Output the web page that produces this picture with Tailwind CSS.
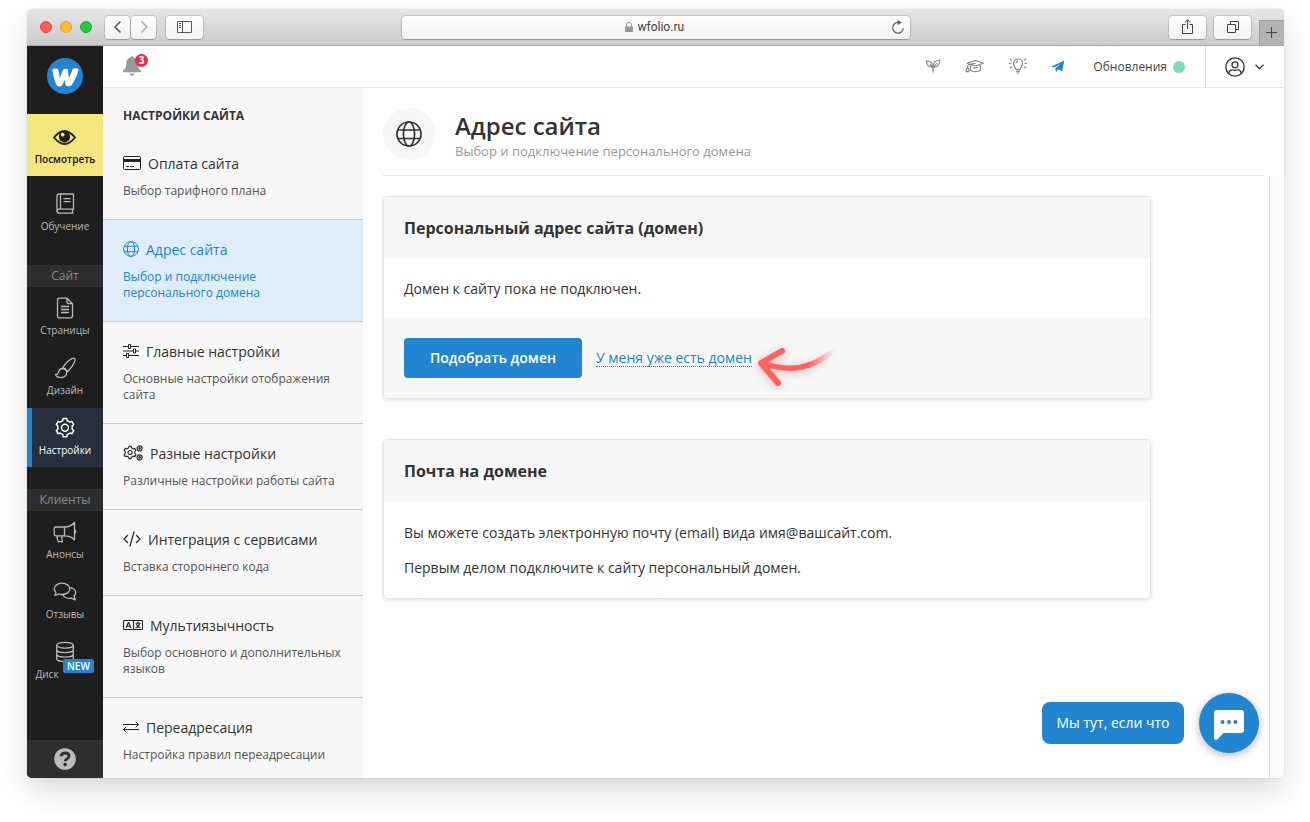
<!DOCTYPE html>
<html lang="ru">
<head>
<meta charset="utf-8">
<meta name="viewport" content="width=device-width, initial-scale=1">
<title>Адрес сайта</title>
<script src="https://cdn.jsdelivr.net/npm/@tailwindcss/browser@4"></script>
</head>
<body class="flex h-screen flex-col bg-white pt-[9px] pr-[26px] pb-11 pl-[27px] font-['Open_Sans','Noto_Sans',sans-serif] text-[#333] overflow-hidden">
<div class="flex min-h-0 flex-1 flex-col rounded-[5px] shadow-[0_0_1px_rgba(0,0,0,0.35),0_14px_30px_-3px_rgba(0,0,0,0.17)]">

  <!-- Browser toolbar -->
  <header class="relative flex h-[37px] shrink-0 items-center rounded-t-[5px] border-b border-[#a5a5a5] bg-linear-to-b from-[#e6e6e6] to-[#cbcbcb] pl-[13px]">
    <div class="flex gap-2">
      <span class="size-3 rounded-full border border-[#e2463f] bg-[#fc5b57]"></span>
      <span class="size-3 rounded-full border border-[#e0a02a] bg-[#fdbc2e]"></span>
      <span class="size-3 rounded-full border border-[#1fac2f] bg-[#27c93f]"></span>
    </div>
    <div class="ml-[13px] flex gap-px">
      <button aria-label="Назад" class="flex h-[23px] w-[25px] items-center justify-center rounded-[4px] bg-linear-to-b from-white to-[#f2f2f2] shadow-[0_0_1px_1px_rgba(0,0,0,0.14),0_1px_0_rgba(0,0,0,0.15)]">
        <svg class="size-3" viewBox="0 0 12 12" fill="none" stroke="#555" stroke-width="1.5"><path d="M8.5.5 3 6l5.500 5.500"/></svg>
      </button>
      <button aria-label="Вперёд" class="flex h-[23px] w-[25px] items-center justify-center rounded-[4px] bg-linear-to-b from-white to-[#f2f2f2] shadow-[0_0_1px_1px_rgba(0,0,0,0.14),0_1px_0_rgba(0,0,0,0.15)]">
        <svg class="size-3" viewBox="0 0 12 12" fill="none" stroke="#aaa" stroke-width="1.500"><path d="M3.500.5 9 6l-5.500 5.500"/></svg>
      </button>
    </div>
    <button aria-label="Боковая панель" class="ml-[10px] flex h-[23px] w-[37px] items-center justify-center rounded-[4px] bg-linear-to-b from-white to-[#f2f2f2] shadow-[0_0_1px_1px_rgba(0,0,0,0.14),0_1px_0_rgba(0,0,0,0.15)]">
      <svg class="h-3 w-[15px]" viewBox="0 0 15 12" fill="none" stroke="#555"><path d="M.5.5h14v11H.5zM5.500.5v11M2 2.500h2M2 4.500h2M2 6.500h2"/></svg>
    </button>
    <form class="absolute inset-y-0 left-[375px] flex w-[508px] items-center">
      <div class="relative flex h-[23px] w-full items-center justify-center gap-[5px] rounded-[4px] bg-linear-to-b from-[#fdfdfd] to-[#f2f2f2] shadow-[0_0_1px_1px_rgba(0,0,0,0.14),0_1px_0_rgba(0,0,0,0.15)]">
        <svg class="h-[10px] w-2" viewBox="0 0 8 10"><path d="M0 4.500h8V10H0z" fill="#999"/><path d="M1.500 5V3a2.500 2.500 0 0 1 5 0v2" fill="none" stroke="#999"/></svg>
        <input aria-label="Адрес" value="wfolio.ru" class="w-[50px] bg-transparent p-0 font-[Roboto,sans-serif] text-[12px] leading-[16px] text-[#444] outline-none">
        <button type="button" aria-label="Обновить" class="absolute right-[5px] flex">
          <svg class="size-[14px]" viewBox="0 0 14 14" fill="none" stroke="#666" stroke-width="1.200"><path d="M7.500 2.500a5.300 5.300 0 1 0 4.800 5.500"/><path d="M6.500 0v5l4.500-2.500z" fill="#666" stroke="none"/></svg>
        </button>
      </div>
    </form>
    <div class="ml-auto flex items-center gap-2">
      <button aria-label="Поделиться" class="flex h-[23px] w-[37px] items-center justify-center rounded-[4px] bg-linear-to-b from-white to-[#f2f2f2] shadow-[0_0_1px_1px_rgba(0,0,0,0.14),0_1px_0_rgba(0,0,0,0.15)]">
        <svg class="mb-px h-[15px] w-[11px]" viewBox="0 0 11 15" fill="none" stroke="#444"><path d="M3.500 5.500h-3v9h10v-9h-3M5.500 10V1M2.700 3.600 5.500.8l2.800 2.800"/></svg>
      </button>
      <button aria-label="Все вкладки" class="flex h-[23px] w-[37px] items-center justify-center rounded-[4px] bg-linear-to-b from-white to-[#f2f2f2] shadow-[0_0_1px_1px_rgba(0,0,0,0.14),0_1px_0_rgba(0,0,0,0.15)]">
        <svg class="size-3" viewBox="0 0 12 12" fill="none" stroke="#444"><path d="M.5 3.500h8v8h-8zM3.500 3.500v-3h8v8h-3"/></svg>
      </button>
      <button aria-label="Новая вкладка" class="-mb-[6px] flex h-[25px] w-[25px] items-center justify-center self-end border-t border-l border-[#9d9d9d] bg-[#b3b3b3] pr-px">
        <svg class="size-[11px]" viewBox="0 0 11 11" stroke="#444"><path d="M5.500 0v11M0 5.500h11"/></svg>
      </button>
    </div>
  </header>

  <div class="flex min-h-0 flex-1 overflow-hidden rounded-b-[5px] bg-white">

    <!-- Main navigation -->
    <nav class="flex w-[76px] shrink-0 flex-col bg-[#1e1e1e] text-center text-[10px] leading-[14px] text-[#bbb]">
      <a href="#" aria-label="wfolio" class="flex h-[68px] items-center justify-center pb-2">
        <svg class="size-9" viewBox="0 0 36 36"><circle cx="18" cy="18" r="18" fill="#2185d0"/><path d="M5.300 11.200c2.600-1 5.400-.8 6 .4.600 2.400 1.100 5.500 1.500 8.300 1.200-3 2.300-5.800 3.300-8.300.9-1 4-1 5 0 .1 3 .3 5.700.7 8.400 1.700-3.100 2.900-6.200 3.700-9 1.200-1 5-.9 6.200.2-1.500 6-4.400 12.300-7.500 16.300-1.200 1-4.100 1-5.300 0-.7-1.700-1.100-3.600-1.400-5.500-.8 2.200-1.600 4.200-2.500 5.800-1.200.8-3.900.8-5 0C7.400 22.700 6 17.100 5.300 11.200z" fill="#fff"/></svg>
      </a>
      <a href="#" class="flex h-[62px] flex-col items-center bg-[#f5e57e] pt-[13px] font-semibold text-[#111]">
        <svg class="mr-px h-5 w-[23px]" viewBox="0 0 23 20"><path d="M1 10.500Q11.500-2.500 22 10.500 11.500 23.500 1 10.500Z" fill="none" stroke="#1e1e1e" stroke-width="1.800"/><circle cx="11.500" cy="9.800" r="5.600" fill="#1e1e1e"/><circle cx="9.700" cy="7.700" r="1.900" fill="#f5e57e"/></svg>
        <span class="mt-[5px]">Посмотреть</span>
      </a>
      <a href="#" class="mt-2 flex h-[59px] flex-col items-center pt-[9px]">
        <svg class="size-[22px]" viewBox="0 0 22 22" fill="none" stroke="#bbb" stroke-width="1.300" stroke-linejoin="round"><path d="M19.500 1H5a2 2 0 0 0-2 2v15a2.200 2.200 0 0 0 2.200 2.200h14.300M19.500 1v15.200H5.200a1.900 1.900 0 0 0 0 3.800M18.500 16.500v3.300M6.500 1v15M9.500 5.700h7M9.500 8.700h7"/></svg>
        <span class="mt-1">Обучение</span>
      </a>
      <h2 class="mt-[22px] h-[22px] bg-[#2e2e2e] text-[12px] leading-[22px] text-[#888]">Сайт</h2>
      <a href="#" class="mt-px flex h-[59px] flex-col items-center pt-[9px]">
        <svg class="size-[22px]" viewBox="0 0 22 22" fill="none" stroke="#bbb" stroke-width="1.300" stroke-linejoin="round"><path d="M13 1.200H5.500a2 2 0 0 0-2 2v15.600a2 2 0 0 0 2 2h11a2 2 0 0 0 2-2V6.700zM13 1.200v3.500a2 2 0 0 0 2 2h3.500M7 9.500h8M7 12.500h8M7 15.500h8"/></svg>
        <span class="mt-1">Страницы</span>
      </a>
      <a href="#" class="mt-px flex h-[59px] flex-col items-center pt-[9px]">
        <svg class="size-[22px]" viewBox="0 0 22 22" fill="none" stroke="#bbb" stroke-width="1.300" stroke-linejoin="round"><path d="M8.200 11.500C11 7 15 3 18.400 1.400c1.500-.7 3 .5 2.600 2C19.800 7.500 16.500 12 12.700 15.200M8.200 11.500c2.200 0 4 1.500 4.500 3.700.2 3.200-2.300 5.400-5.700 5.400-2.800 0-4.800-1.400-5.500-3.100 1.500.2 2.300-.2 2.900-2 .6-2.500 1.800-3.900 3.800-4zM9 10.500c2 .6 3.500 2 4.300 4"/></svg>
        <span class="mt-1">Дизайн</span>
      </a>
      <a href="#" aria-current="page" class="mt-px flex h-[59px] flex-col items-center border-l-5 border-[#2185d0] bg-[#27303c] pt-[9px] pr-[5px] text-white">
        <svg class="size-[22px]" viewBox="0 0 24 24" fill="none" stroke="#fff" stroke-width="1.600" stroke-linejoin="round"><path d="M9.600 3.900 10 1.700h4l.4 2.200 3 1.700 2.100-.8 2 3.500-1.700 1.500v3.600l1.700 1.400-2 3.500-2.100-.8-3 1.700-.4 2.300h-4l-.4-2.300-3-1.700-2.100.8-2-3.500 1.700-1.400V9.800L2.500 8.300l2-3.500 2.100.8z"/><circle cx="12" cy="11.700" r="3.800"/></svg>
        <span class="mt-1">Настройки</span>
      </a>
      <h2 class="mt-[22px] h-[22px] bg-[#2e2e2e] text-[12px] leading-[22px] text-[#888]">Клиенты</h2>
      <a href="#" class="mt-px flex h-[59px] flex-col items-center pt-[9px]">
        <svg class="h-[22px] w-6" viewBox="0 0 24 22" fill="none" stroke="#bbb" stroke-width="1.300" stroke-linejoin="round"><path d="M11.500 6H3a1.800 1.800 0 0 0-1.800 1.800V13A1.800 1.800 0 0 0 3 14.800h8.500zM11.500 6c4 0 7.500-1.600 10-4.500v17.300c-2.500-2.800-6-4-10-4M21.500 8.300c1.600.3 1.600 3.400 0 3.900M4 14.800c0 2 .3 3.800 1.200 5.800h4.300c-1-1.700-.8-4-.4-5.800"/></svg>
        <span class="mt-1">Анонсы</span>
      </a>
      <a href="#" class="mt-px flex h-[59px] flex-col items-center pt-[9px]">
        <svg class="h-[22px] w-6" viewBox="0 0 24 22" fill="none" stroke="#bbb" stroke-width="1.300" stroke-linejoin="round"><path d="M9 2.200c4.300 0 7.800 2.500 7.800 5.700S13.300 13.500 9 13.500c-1.200 0-2.300-.2-3.300-.5-1.300.8-2.500 1.200-4 1.200.8-.9 1.200-1.700 1.300-2.700A5 5 0 0 1 1.200 7.900C1.200 4.700 4.700 2.200 9 2.200zM16.700 6.700c3.400.2 6 2.400 6 5 0 1.300-.6 2.500-1.600 3.400.1 1.400.6 2.600 1.400 3.700-1.600-.1-2.900-.7-4.100-1.700-4 .9-7.400-.9-8.600-3.700"/></svg>
        <span class="mt-1">Отзывы</span>
      </a>
      <a href="#" class="relative mt-px flex h-[59px] flex-col items-center pt-[9px]">
        <svg class="size-[22px]" viewBox="0 0 22 22" fill="none" stroke="#bbb" stroke-width="1.300"><ellipse cx="11" cy="4.200" rx="8.300" ry="2.900"/><path d="M2.700 4.200v13.600c0 1.600 3.700 2.900 8.300 2.900s8.300-1.300 8.300-2.900V4.200M2.700 8.700c0 1.600 3.700 2.900 8.300 2.900s8.300-1.300 8.300-2.900M2.700 13.200c0 1.600 3.700 2.900 8.300 2.900s8.300-1.300 8.300-2.900"/></svg>
        <span class="mt-1 mr-9">Диск</span>
        <span class="absolute top-[27px] left-9 h-[14px] rounded-[2px] bg-[#2185d0] px-1 font-semibold text-white">NEW</span>
      </a>
      <a href="#" aria-label="Помощь" class="mt-auto flex h-[38px] items-center justify-center bg-[#2e2e2e]">
        <svg class="size-[22px]" viewBox="0 0 22 22"><circle cx="11" cy="11" r="10.800" fill="#bbb"/><path d="M7 8.300C7.500 6 9 5 11.100 5c2.300 0 4 1.100 4 3.100 0 2.800-4 2.700-4 5.200" fill="none" stroke="#2e2e2e" stroke-width="2.800"/><circle cx="11.100" cy="16.600" r="1.800" fill="#2e2e2e"/></svg>
      </a>
    </nav>

    <div class="flex min-w-0 flex-1 flex-col">
      <!-- Top bar -->
      <div class="flex h-[42px] shrink-0 items-center border-b border-[#e4e4e4] pl-5">
        <button aria-label="Уведомления: 3" class="relative mb-[2px] flex">
          <svg class="h-5 w-[18px]" viewBox="0 0 18 20" fill="#999"><path d="M8 1.200C8 .5 8.400 0 9 0s1 .5 1 1.200c3.200.6 4.700 3 4.800 6.300.1 4 .9 5.300 2.700 6.800.9.800.5 2-.6 2H1.100c-1.100 0-1.500-1.200-.6-2 1.800-1.500 2.600-2.800 2.700-6.800C3.300 4.200 4.800 1.800 8 1.200zM6.500 17.500h5c-.4 1.400-1.300 2.200-2.500 2.200s-2.100-.8-2.500-2.200z"/></svg>
          <span class="absolute -top-[2px] left-3 size-[13px] rounded-full bg-[#f02849] text-[10px] leading-[13px] font-bold text-white">3</span>
        </button>
        <div class="ml-auto flex items-center gap-6">
          <a href="#" aria-label="Новичкам"><svg class="mb-px size-4" viewBox="0 0 16 16" fill="none" stroke="#888" stroke-width="1.200" stroke-linejoin="round"><path d="M8 14.500V9.500M1.500 3.200c4-.3 6.300 2 6.500 6.300-4 0-6.500-2.300-6.500-6.300zM8 9.500c-.3-4.300 2-7.300 6.700-7.500.2 4.500-2.200 7.500-6.700 7.500L12 5.200M8 9.500 4.800 6.200"/></svg></a>
          <a href="#" aria-label="Обучение"><svg class="mb-px h-4 w-5" viewBox="0 0 20 16" fill="none" stroke="#888" stroke-width="1.200" stroke-linejoin="round"><path d="M10.500 2.500 18.500 5.300 10.500 8 2 5.300zM5.500 7v5.300c2.500 1.800 7.500 1.800 10 0V7M10.500 5.300 4 6.500C2.600 6.900 2.500 8 2.500 10M1.500 10.500h2l.4 3.200H1.200zM8 9.800l5-.2"/></svg></a>
          <a href="#" aria-label="Идеи"><svg class="mb-px h-4 w-[18px]" viewBox="0 0 18 16" fill="none" stroke="#888" stroke-width="1.200"><path d="M7 11.500c0-1.800-2.500-3-2.500-6a4.500 4.500 0 0 1 9 0c0 3-2.500 4.200-2.500 6zM7 13.200h4M7.700 15h2.600M7 5c.1-1.200.8-1.800 2-1.900M0 5.500h2.500M15.500 5.500H18M.8 1l2.200 1.300M17.200 1 15 2.300M.8 10 3 8.700M17.200 10 15 8.700"/></svg></a>
          <a href="#" aria-label="Telegram"><svg class="mb-px h-4 w-[14px]" viewBox="0 0 14 16" fill="#2185d0"><path d="M13.200 2.500 11.300 13.300 7 11.300 5 14.300 4.300 10.200 10.300 5.500 3.200 9.500.5 8.500z"/></svg></a>
          <a href="#" class="ml-[4px] flex items-center gap-[6px] text-[12px] leading-4 text-[#444]">Обновления <span class="size-3 rounded-full bg-[#7bdcb5]"></span></a>
        </div>
        <button aria-label="Профиль" class="ml-5 flex h-[41px] w-[79px] items-center gap-[10px] border-l border-[#e4e4e4] pl-[19px]">
          <svg class="size-5" viewBox="0 0 20 20" fill="none" stroke="#333" stroke-width="1.300"><circle cx="10" cy="10" r="9.200"/><circle cx="10" cy="7.800" r="3"/><path d="M3.800 16.500c.2-2.500 1.600-3.700 3.700-3.700.9.500 1.700.7 2.500.7s1.600-.2 2.500-.7c2.100 0 3.500 1.200 3.700 3.700"/></svg>
          <svg class="h-[6px] w-[9px]" viewBox="0 0 9 6" fill="none" stroke="#333" stroke-width="1.300"><path d="M.5.7l4 4 4-4"/></svg>
        </button>
      </div>

      <div class="flex min-h-0 flex-1">
        <!-- Settings menu -->
        <aside class="w-[260px] shrink-0 overflow-hidden bg-[#f7f7f7] text-[12px] leading-4 text-[#555]">
          <h2 class="h-[46px] px-5 pt-5 font-bold text-[#333]">НАСТРОЙКИ САЙТА</h2>
          <a href="#" class="block border-b border-[#ccc] px-5 py-5">
            <span class="flex items-center gap-[7px] text-[14px] leading-5 text-[#333]"><svg class="mb-[2px] h-[14px] w-[18px]" viewBox="0 0 18 14" fill="none" stroke="#222"><rect x=".5" y=".5" width="17" height="13" rx="1"/><path d="M1 4.500h16" stroke-width="3"/><path d="M3 10.500h3M7 10.500h4"/></svg>Оплата сайта</span>
            <span class="mt-[9px] block">Выбор тарифного плана</span>
          </a>
          <a href="#" aria-current="page" class="block border-b border-[#c3cdd4] bg-[#deedf8] px-5 py-5 text-[#2185d0]">
            <span class="flex items-center gap-[7px] text-[14px] leading-5"><svg class="mb-[2px] size-4" viewBox="0 0 16 16" fill="none" stroke="#2185d0"><circle cx="8" cy="8" r="7.400"/><ellipse cx="8" cy="8" rx="3.700" ry="7.400"/><path d="M1.100 5.300h13.800M1.100 10.700h13.800"/></svg>Адрес сайта</span>
            <span class="mt-[9px] block">Выбор и подключение персонального домена</span>
          </a>
          <a href="#" class="block border-b border-[#ccc] px-5 py-5">
            <span class="flex items-center gap-[7px] text-[14px] leading-5 text-[#333]"><svg class="mb-[2px] h-[14px] w-4" viewBox="0 0 16 14" fill="none" stroke="#222"><path d="M0 2.500h5M8 2.500h8M0 7h10M13 7h3M0 11.500h3M6 11.500h10M5.500.5h2v4h-2zM10.500 5h2v4h-2zM3.500 9.500h2v4h-2z"/></svg>Главные настройки</span>
            <span class="mt-[9px] block">Основные настройки отображения сайта</span>
          </a>
          <a href="#" class="block border-b border-[#ccc] px-5 py-5">
            <span class="flex items-center gap-[7px] text-[14px] leading-5 text-[#333]"><svg class="mb-[2px] h-4 w-5" viewBox="0 0 20 16" fill="none" stroke="#333" stroke-width="1.200" stroke-linejoin="round"><path d="m5.600 2.800.3-1.500h2.300l.3 1.500 1.900 1.100 1.400-.5 1.100 2-1.100 1v2.200l1.100 1-1.100 2-1.400-.5-1.900 1.100-.3 1.500H5.900l-.3-1.500-1.900-1.100-1.500.5-1.100-2 1.100-1V6.400l-1.100-1 1.100-2 1.500.5z"/><circle cx="7" cy="7.500" r="2"/><circle cx="16.600" cy="3.400" r="2.500"/><circle cx="16.600" cy="3.400" r=".7"/><circle cx="16.600" cy="12.400" r="2.500"/><circle cx="16.600" cy="12.400" r=".7"/></svg>Разные настройки</span>
            <span class="mt-[9px] block">Различные настройки работы сайта</span>
          </a>
          <a href="#" class="block border-b border-[#ccc] px-5 py-5">
            <span class="flex items-center gap-[7px] text-[14px] leading-5 text-[#333]"><svg class="mb-[2px] h-4 w-[18px]" viewBox="0 0 18 16" fill="none" stroke="#222" stroke-width="1.200"><path d="M5 4 1 8l4 4M13 4l4 4-4 4M11.200.5 6.800 15.500"/></svg>Интеграция с сервисами</span>
            <span class="mt-[9px] block">Вставка стороннего кода</span>
          </a>
          <a href="#" class="block border-b border-[#ccc] px-5 py-5">
            <span class="flex items-center gap-[7px] text-[14px] leading-5 text-[#333]"><svg class="mb-[2px] h-[10px] w-5" viewBox="0 0 20 10" fill="none" stroke="#222"><path d="M.5.5h19v9H.5zM10.500.5v9"/><path d="m3.200 8 2.100-5.500h.4L7.800 8M4 6.200h3M12.500 3.300h5M15 1.800v1.500M16.700 3.500c-.5 2-2 3.600-4.200 4.500M13.300 4.200c.8 1.700 2.300 3.100 4.200 3.800" stroke-width="1.100"/></svg>Мультиязычность</span>
            <span class="mt-[9px] block">Выбор основного и дополнительных языков</span>
          </a>
          <a href="#" class="block px-5 py-5">
            <span class="flex items-center gap-[7px] text-[14px] leading-5 text-[#333]"><svg class="mb-[2px] h-3 w-4" viewBox="0 0 16 12" fill="none" stroke="#222"><path d="M0 3.500h15.500M12.700.7l2.800 2.800-2.800 2.800M16 8.500H.5M3.300 5.700.5 8.500l2.800 2.800"/></svg>Переадресация</span>
            <span class="mt-[9px] block">Настройка правил переадресации</span>
          </a>
        </aside>

        <!-- Page -->
        <main class="flex min-w-0 flex-1 flex-col">
          <div class="mx-5 flex h-[88px] shrink-0 gap-5 border-b border-[#e4e4e4] pt-5">
            <span class="flex size-[52px] items-center justify-center rounded-full bg-[#f7f7f7]">
              <svg class="size-[26px]" viewBox="0 0 26 26" fill="none" stroke="#333" stroke-width="1.700"><circle cx="13" cy="13" r="12"/><ellipse cx="13" cy="13" rx="5.600" ry="12"/><path d="M1.800 9h22.400M1.800 17.500h22.400"/></svg>
            </span>
            <div class="pt-[3px]">
              <h1 class="text-[24px] leading-[30px] font-semibold">Адрес сайта</h1>
              <p class="mt-px text-[13px] leading-[18px] text-[#999]">Выбор и подключение персонального домена</p>
            </div>
          </div>
          <div class="flex min-h-0 flex-1">
            <div class="min-w-0 flex-1 px-5 pt-5">
              <div class="max-w-[768px] text-[14px] leading-5">
                <section class="overflow-hidden rounded-[4px] border border-[#e4e4e4] shadow-[0_1px_4px_rgba(0,0,0,0.14)]">
                  <h2 class="bg-[#f7f7f7] px-5 py-5 text-[16px] leading-[22px] font-bold">Персональный адрес сайта (домен)</h2>
                  <p class="px-5 pt-5 pb-[19px]">Домен к сайту пока не подключен.</p>
                  <div class="flex items-center gap-[14px] bg-[#f7f7f7] p-5">
                    <button class="h-10 w-[178px] rounded-[4px] bg-[#2185d0] font-semibold text-white">Подобрать домен</button>
                    <a href="#" class="relative border-b border-dotted border-[#2185d0] leading-[17px] text-[#2185d0]">У меня уже есть домен
                      <svg class="pointer-events-none absolute -top-6 left-full h-[70px] w-[90px] drop-shadow-[0_2px_4px_rgba(150,60,60,0.35)]" viewBox="0 0 90 70" fill="none" stroke-linecap="round" stroke-linejoin="round"><defs><linearGradient id="tail" x1="8" y1="0" x2="82" y2="0" gradientUnits="userSpaceOnUse"><stop offset=".65" stop-color="#ff625c"/><stop offset="1" stop-color="#ff625c" stop-opacity="0"/></linearGradient></defs><path d="M11 38Q50 53 82 25" stroke="url(#tail)" stroke-width="5.500"/><path d="M30 26 9 38 26 58" stroke="#ff625c" stroke-width="6"/></svg>
                    </a>
                  </div>
                </section>
                <section class="mt-10 overflow-hidden rounded-[4px] border border-[#e4e4e4] shadow-[0_1px_4px_rgba(0,0,0,0.14)]">
                  <h2 class="bg-[#f7f7f7] px-5 py-5 text-[16px] leading-[22px] font-bold">Почта на домене</h2>
                  <div class="flex flex-col gap-[15px] px-5 pt-[21px] pb-5">
                    <p>Вы можете создать электронную почту (email) вида имя@вашсайт.com.</p>
                    <p>Первым делом подключите к сайту персональный домен.</p>
                  </div>
                </section>
              </div>
            </div>
            <div class="w-[15px] shrink-0 border-l border-[#e4e4e4] bg-[#fafafa]"></div>
          </div>
        </main>
      </div>
    </div>
  </div>
</div>

<!-- Support chat -->
<div class="fixed right-[51px] bottom-[69px] flex items-center gap-[15px]">
  <button class="h-[42px] w-[142px] rounded-[8px] bg-[#2185d0] pb-px text-[14px] font-medium text-white">Мы тут, если что</button>
  <button aria-label="Открыть чат" class="flex size-[60px] items-center justify-center rounded-full bg-[#2185d0] shadow-[0_2px_8px_rgba(0,0,0,0.3)]">
    <svg class="mt-[3px] size-[30px]" viewBox="0 0 30 30"><path d="M3 0h24a3 3 0 0 1 3 3v17a3 3 0 0 1-3 3H9.500L3.700 29.200C2.500 30.500 0 30 0 28V3a3 3 0 0 1 3-3z" fill="#fff"/><g fill="#2185d0"><circle cx="8.500" cy="12" r="2"/><circle cx="15" cy="12" r="2"/><circle cx="21.500" cy="12" r="2"/></g></svg>
  </button>
</div>
</body>
</html>
